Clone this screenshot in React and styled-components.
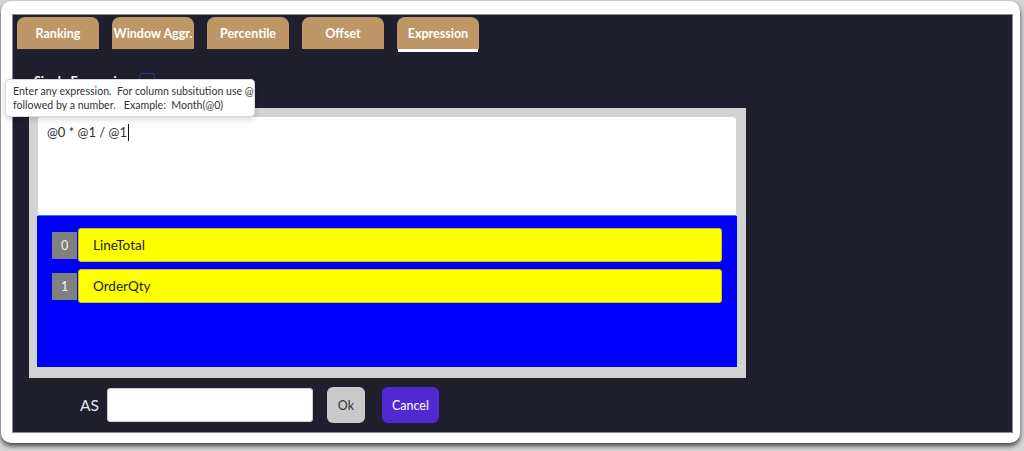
import React from 'react';
import styled, { createGlobalStyle } from 'styled-components';

const GlobalStyle = createGlobalStyle`
  html, body {
    margin: 0;
    padding: 0;
    background: #d6d6d6;
    font-family: Lato, "Noto Sans", Arial, sans-serif;
  }
  #root {
    width: 1024px;
    height: 451px;
    overflow: hidden;
  }
`;

const Frame = styled.div`
  position: relative;
  box-sizing: border-box;
  margin: 1px 0 0 1px;
  width: 1019px;
  height: 442px;
  padding: 13px 7px 10px 11px;
  background: #ffffff;
  border-radius: 10px;
  box-shadow: 0 3px 5px rgba(40, 40, 40, 0.85);
`;

const Panel = styled.div`
  box-sizing: border-box;
  height: 100%;
  background: #201f2e;
  border: 1px solid #8a8a92;
  display: flex;
  flex-direction: column;
`;

const TabBar = styled.div`
  display: flex;
  gap: 13px;
  padding: 2px 0 0 4px;
`;

const Tab = styled.div`
  box-sizing: border-box;
  width: 82px;
  height: 32px;
  display: flex;
  align-items: center;
  justify-content: center;
  background: #bf9668;
  color: #ffffff;
  font-size: 12.5px;
  font-weight: 700;
  white-space: nowrap;
  border-radius: 8px 8px 0 0;
  box-shadow: ${(p) => (p.$active ? '0 4px 0 -1px #ffffff' : 'none')};
`;

const OptionRow = styled.div`
  display: flex;
  align-items: center;
  gap: 8px;
  height: 16px;
  margin: 24px 0 0 21px;
  color: #ffffff;
  font-size: 12.5px;
  font-weight: 700;
`;

const Check = styled.span`
  box-sizing: border-box;
  width: 16px;
  height: 16px;
  border: 1.5px solid #3b2f9e;
  border-radius: 3px;
`;

const Tooltip = styled.div`
  position: absolute;
  left: 4px;
  top: 78px;
  box-sizing: border-box;
  width: 250px;
  padding: 5px 7px 4px;
  background: #ffffff;
  border: 1px solid #d8d8d8;
  border-radius: 4px;
  box-shadow: 0 2px 6px rgba(0, 0, 0, 0.18);
  color: #333333;
  font-size: 10.6px;
  line-height: 13.5px;
  white-space: pre;
`;

const EditorBox = styled.div`
  box-sizing: border-box;
  width: 717px;
  margin: 19px 0 0 16px;
  padding: 9px 9px 11px 8px;
  background: #d3d3d3;
`;

const Editor = styled.div`
  box-sizing: border-box;
  height: 99px;
  margin: 0 1px;
  padding: 5px 9px;
  background: #ffffff;
  border-radius: 3px 3px 0 0;
  border-bottom: 1px solid #2a7fd4;
  color: #333333;
  font-size: 13px;
  line-height: 20px;
`;

const Caret = styled.span`
  display: inline-block;
  width: 1px;
  height: 17px;
  margin-left: 1px;
  vertical-align: -4px;
  background: #111111;
`;

const ColumnList = styled.div`
  box-sizing: border-box;
  height: 151px;
  padding: 12px 15px;
  background: #0000ff;
  display: flex;
  flex-direction: column;
  gap: 7px;
`;

const ColumnRow = styled.div`
  display: flex;
  align-items: center;
  gap: 1px;
`;

const Index = styled.span`
  width: 25px;
  height: 27px;
  display: flex;
  align-items: center;
  justify-content: center;
  background: #808080;
  color: #f2f2f2;
  font-size: 12.5px;
`;

const ColumnName = styled.div`
  box-sizing: border-box;
  flex: 1;
  height: 34px;
  display: flex;
  align-items: center;
  padding-left: 14px;
  background: #ffff00;
  border: 1px solid #c9c41a;
  border-radius: 3px;
  color: #1c1c1c;
  font-size: 13.5px;
`;

const Footer = styled.div`
  display: flex;
  align-items: center;
  margin: 9px 0 0 67px;
`;

const Label = styled.span`
  color: #e6e6e6;
  font-size: 15.5px;
  margin-right: 8px;
`;

const NameInput = styled.input`
  box-sizing: border-box;
  width: 206px;
  height: 34px;
  border: 1px solid #cfcfcf;
  border-radius: 3px;
  background: #ffffff;
  outline: none;
`;

const Button = styled.button`
  box-sizing: border-box;
  height: 36px;
  padding: 0;
  width: ${(p) => p.$width}px;
  margin-left: ${(p) => p.$gap}px;
  border: none;
  border-radius: 6px;
  background: ${(p) => (p.$primary ? '#5029d1' : '#c9c9c9')};
  color: ${(p) => (p.$primary ? '#ffffff' : '#333333')};
  font-family: inherit;
  font-size: 12.5px;
`;

const tabs = ['Ranking', 'Window Aggr.', 'Percentile', 'Offset', 'Expression'];
const columns = ['LineTotal', 'OrderQty'];

export default function App() {
  return (
    <>
      <GlobalStyle />
      <Frame>
        <Panel>
          <TabBar>
            {tabs.map((t) => (
              <Tab key={t} $active={t === 'Expression'}>
                {t}
              </Tab>
            ))}
          </TabBar>
          <OptionRow>
            Single Expression
            <Check />
          </OptionRow>
          <EditorBox>
            <Editor>
              @0 * @1 / @1
              <Caret />
            </Editor>
            <ColumnList>
              {columns.map((c, i) => (
                <ColumnRow key={c}>
                  <Index>{i}</Index>
                  <ColumnName>{c}</ColumnName>
                </ColumnRow>
              ))}
            </ColumnList>
          </EditorBox>
          <Footer>
            <Label>AS</Label>
            <NameInput />
            <Button $width={38} $gap={14}>Ok</Button>
            <Button $width={57} $gap={17} $primary>Cancel</Button>
          </Footer>
        </Panel>
        <Tooltip>
          {'Enter any expression.  For column subsitution use @\nfollowed by a number.   Example:  Month(@0)'}
        </Tooltip>
      </Frame>
    </>
  );
}
